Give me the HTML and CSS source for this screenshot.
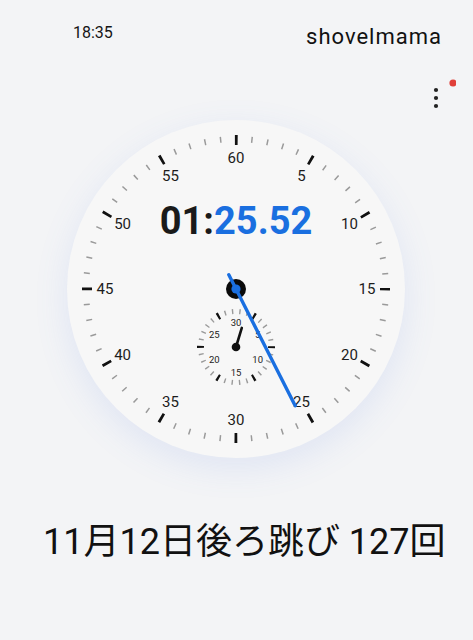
FILE: index.html
```html
<!DOCTYPE html>
<html lang="ja">
<head>
<meta charset="utf-8">
<title>Stopwatch</title>
<link rel="stylesheet" href="styles.css">
</head>
<body>
<div class="screen">
  <header class="status">
    <span class="time">18:35</span>
    <span class="user">shovelmama</span>
  </header>
  <div class="toolbar">
    <svg class="menu" width="30" height="34" viewBox="0 0 30 34">
      <circle cx="10" cy="14" r="2.1" fill="#222"/>
      <circle cx="10" cy="22" r="2.1" fill="#222"/>
      <circle cx="10" cy="30" r="2.1" fill="#222"/>
      <circle cx="27" cy="7" r="3.6" fill="#e0403a"/>
    </svg>
  </div>
  <div class="dial">
    <svg class="face" viewBox="-169 -169 338 338" width="338" height="338">
      <circle r="150" fill="none" stroke="#9a9a9a" stroke-width="6" stroke-dasharray="1.5 14.208" stroke-dashoffset="0.75"/>
      <circle r="149" fill="none" stroke="#111" stroke-width="10" stroke-dasharray="2.8 75.216" stroke-dashoffset="1.4"/>
      <g class="nums">
        <text x="0" y="-131">60</text>
        <text x="65.5" y="-113.4">5</text>
        <text x="113.4" y="-65.5">10</text>
        <text x="131" y="0">15</text>
        <text x="113.4" y="65.5">20</text>
        <text x="65.5" y="113.4">25</text>
        <text x="0" y="131">30</text>
        <text x="-65.5" y="113.4">35</text>
        <text x="-113.4" y="65.5">40</text>
        <text x="-131" y="0">45</text>
        <text x="-113.4" y="-65.5">50</text>
        <text x="-65.5" y="-113.4">55</text>
      </g>
      <text class="digital" x="0" y="-55">01:<tspan class="secs">25.52</tspan></text>
      <g transform="translate(0 58)">
        <circle r="35.5" fill="none" stroke="#9a9a9a" stroke-width="5" stroke-dasharray="1.4 6.035" stroke-dashoffset="0.7"/>
        <circle r="35.5" fill="none" stroke="#111" stroke-width="7" stroke-dasharray="2.2 34.975" stroke-dashoffset="1.1"/>
        <g class="subnums">
          <text x="0" y="-25">30</text>
          <text x="21.65" y="-12.5">5</text>
          <text x="21.65" y="12.5">10</text>
          <text x="0" y="25">15</text>
          <text x="-21.65" y="12.5">20</text>
          <text x="-21.65" y="-12.5">25</text>
        </g>
        <line x1="0" y1="0" x2="5.8" y2="-19.1" stroke="#111" stroke-width="2.6" stroke-linecap="round"/>
        <circle r="4.3" fill="#111"/>
      </g>
      <circle r="10" fill="#0a0a0a"/>
      <line x1="-7.2" y1="-14.3" x2="59.2" y2="116.8" stroke="#1a6fe0" stroke-width="3.4" stroke-linecap="round"/>
      <circle r="4.6" fill="#1a6fe0"/>
    </svg>
  </div>
  <p class="caption">11月12日後ろ跳び 127回</p>
</div>
</body>
</html>
```
FILE: styles.css
```css
* { box-sizing: border-box; }
html, body { margin: 0; padding: 0; }
body {
  background: #f3f4f6;
  font-family: Roboto, "Noto Sans", "Noto Sans CJK JP", sans-serif;
  color: #111;
}
.screen {
  width: 473px;
  height: 640px;
  overflow: hidden;
}
.status {
  display: flex;
  justify-content: space-between;
  align-items: flex-start;
  height: 76px;
  padding: 0 31px 0 73px;
}
.time {
  margin-top: 25px;
  font-size: 16px;
  line-height: 16px;
  font-weight: 400;
  color: #151515;
}
.user {
  margin-top: 25px;
  font-size: 22px;
  line-height: 24px;
  letter-spacing: 1px;
}
.toolbar {
  display: flex;
  justify-content: flex-end;
  height: 34px;
  padding-right: 17px;
}
.menu { display: block; }
.dial {
  width: 338px;
  height: 338px;
  margin: 10px 0 0 67px;
  border-radius: 50%;
  background: #f7f7f7;
  box-shadow: 0 10px 34px rgba(90, 130, 230, 0.13);
}
.face { display: block; }
.nums text {
  font-family: Roboto, sans-serif;
  font-size: 15px;
  fill: #1c1c1c;
  text-anchor: middle;
  dominant-baseline: central;
}
.subnums text {
  font-family: Roboto, sans-serif;
  font-size: 9.5px;
  fill: #1c1c1c;
  text-anchor: middle;
  dominant-baseline: central;
}
.digital {
  font-family: Roboto, sans-serif;
  font-weight: 700;
  font-size: 38px;
  fill: #1a1a1a;
  text-anchor: middle;
}
.secs { fill: #1a6fe0; }
.caption {
  margin: 62px 0 0 0;
  padding-left: 43px;
  font-family: Roboto, "Noto Sans CJK JP", sans-serif;
  font-size: 36px;
  line-height: 44px;
  color: #111;
  white-space: nowrap;
}
```
